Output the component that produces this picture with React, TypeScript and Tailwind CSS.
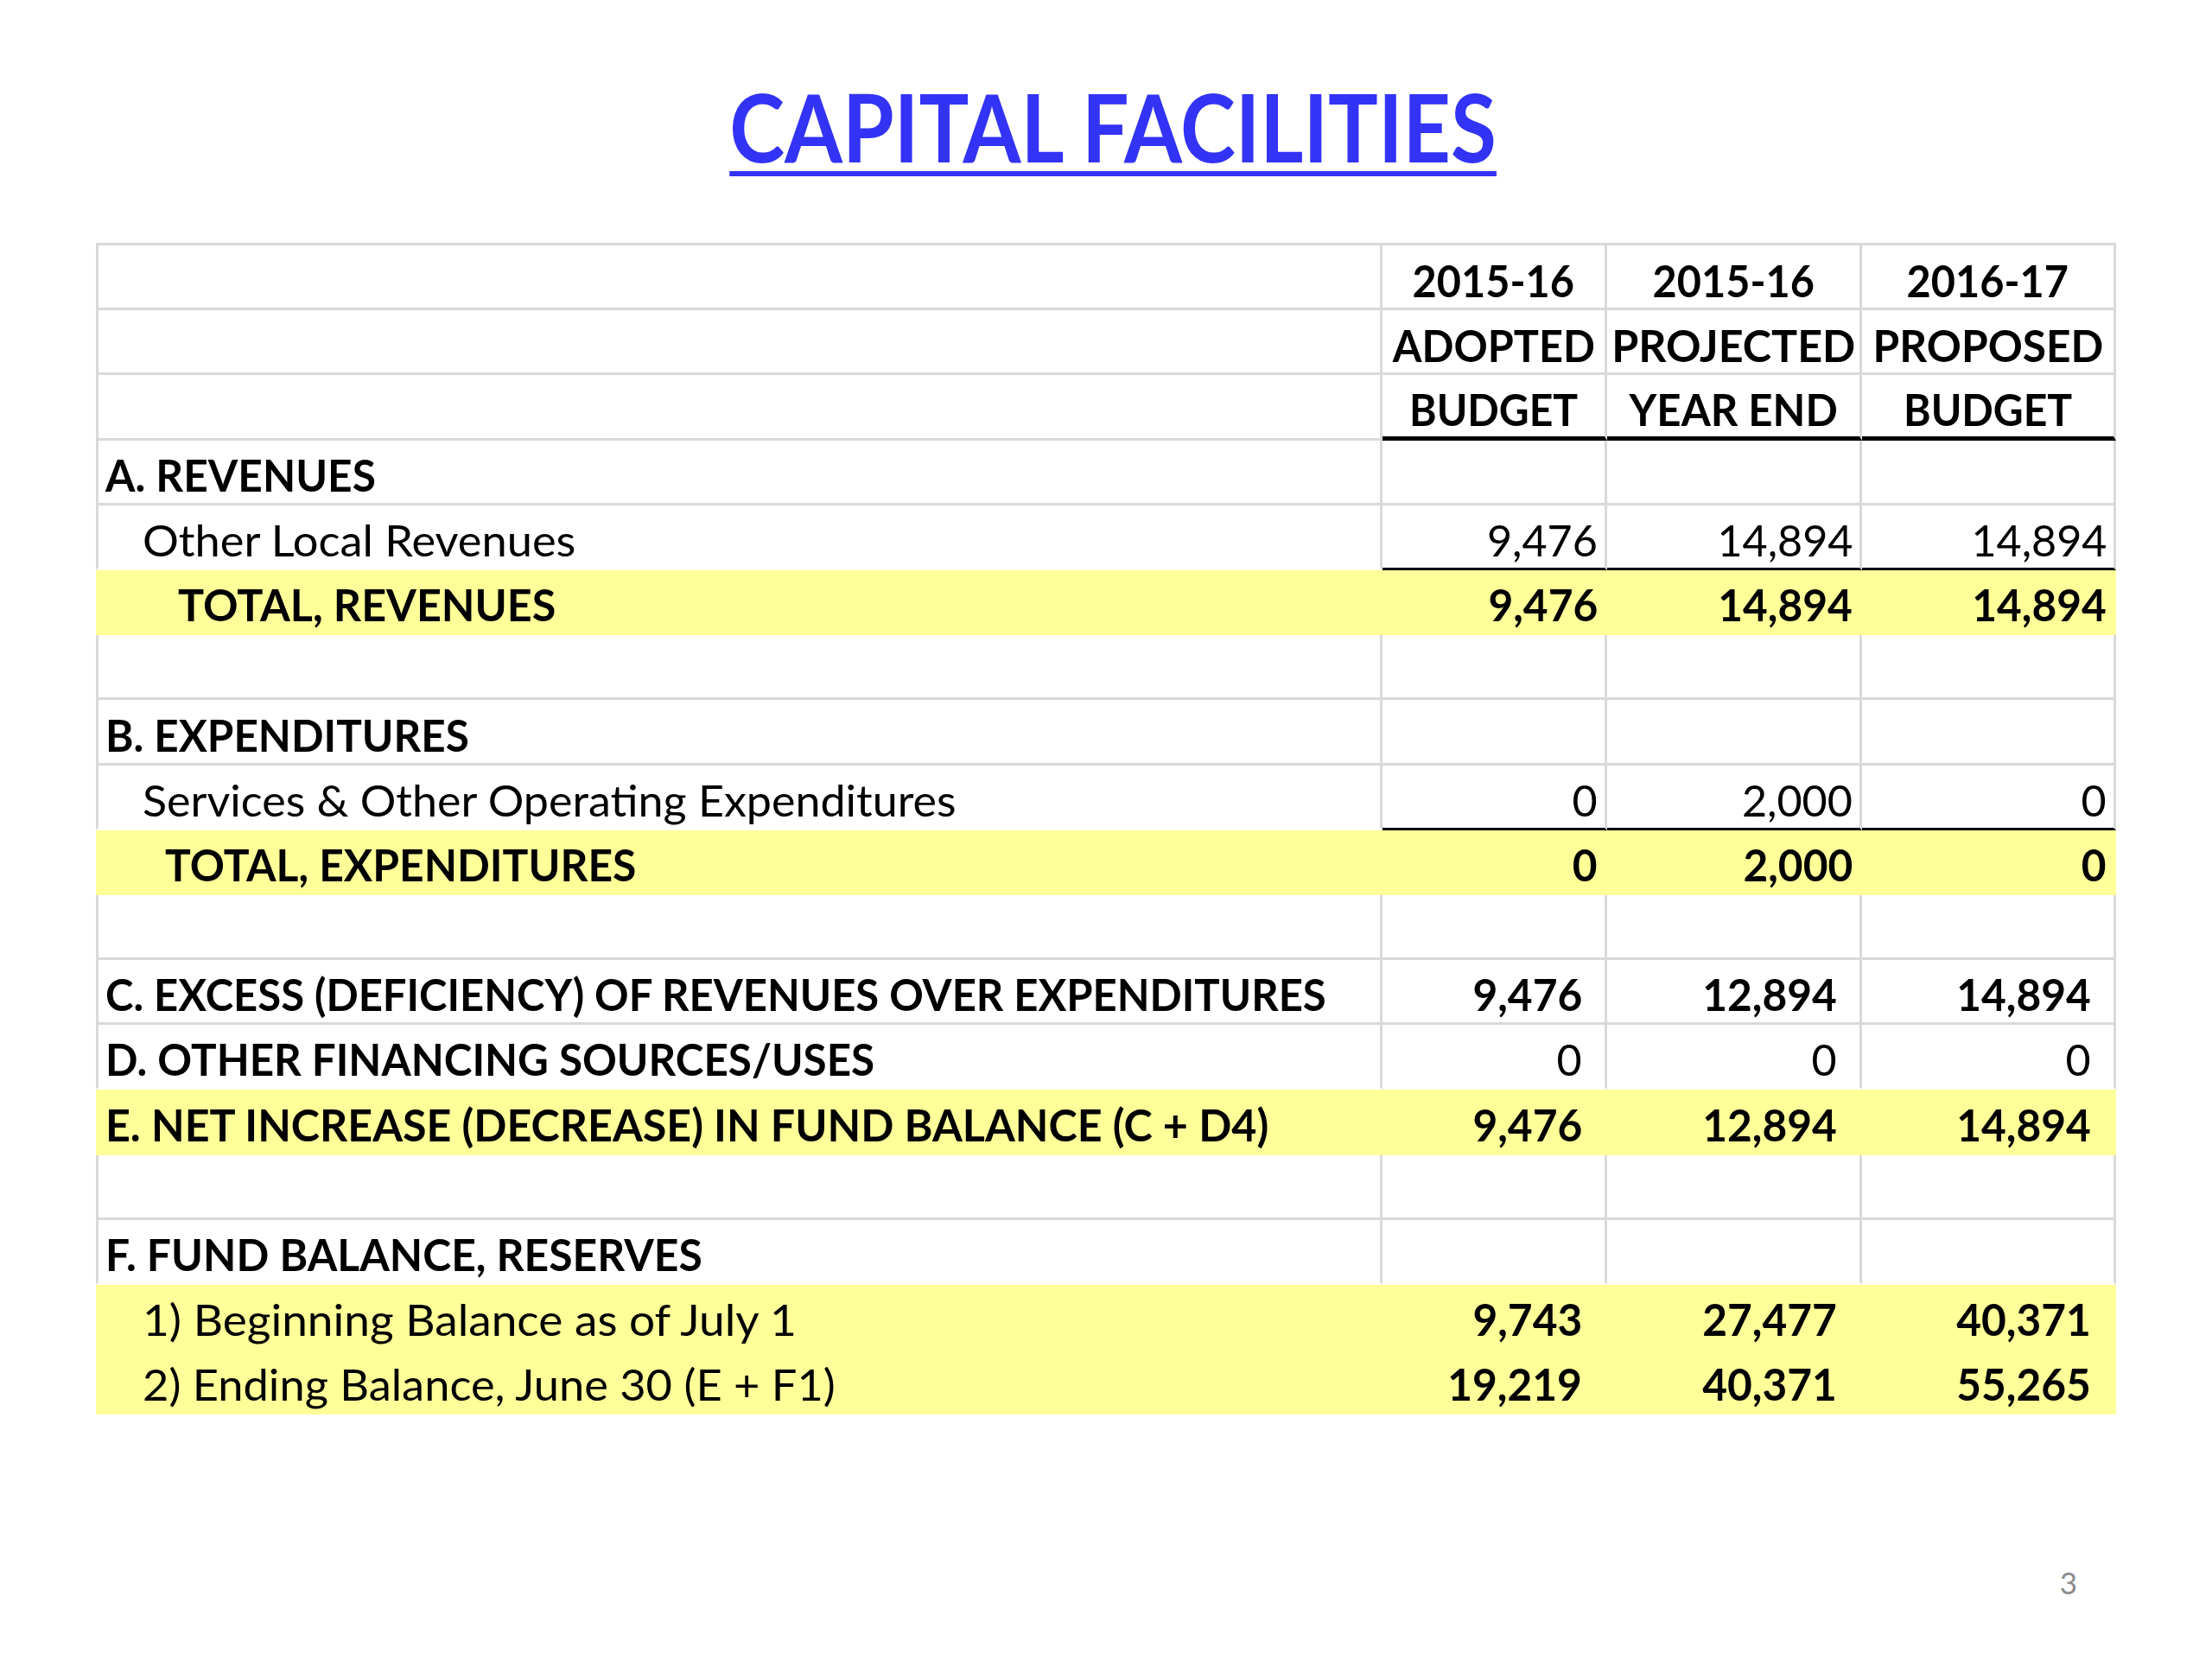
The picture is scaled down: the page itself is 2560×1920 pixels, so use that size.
import React from "react";

type Bottom = "gray" | "none" | "black";

type RowDef = {
  label: string;
  indent: string;
  sx: string;
  bold: boolean;
  vals: string[];
  valsBold: boolean;
  far: boolean;
  yellow: boolean;
  bottom: Bottom;
};

const rows: RowDef[] = [
  { label: "A. REVENUES", indent: "pl-[8px]", sx: "scale-x-[0.974]", bold: true, vals: ["", "", ""], valsBold: false, far: false, yellow: false, bottom: "gray" },
  { label: "Other Local Revenues", indent: "pl-[51px]", sx: "scale-x-[1.027]", bold: false, vals: ["9,476", "14,894", "14,894"], valsBold: false, far: false, yellow: false, bottom: "black" },
  { label: "TOTAL, REVENUES", indent: "pl-[92px]", sx: "scale-x-[0.985]", bold: true, vals: ["9,476", "14,894", "14,894"], valsBold: true, far: false, yellow: true, bottom: "none" },
  { label: "", indent: "pl-[8px]", sx: "scale-x-100", bold: false, vals: ["", "", ""], valsBold: false, far: false, yellow: false, bottom: "gray" },
  { label: "B. EXPENDITURES", indent: "pl-[8px]", sx: "scale-x-[0.969]", bold: true, vals: ["", "", ""], valsBold: false, far: false, yellow: false, bottom: "gray" },
  { label: "Services & Other Operating Expenditures", indent: "pl-[51px]", sx: "scale-x-[1.02]", bold: false, vals: ["0", "2,000", "0"], valsBold: false, far: false, yellow: false, bottom: "black" },
  { label: "TOTAL, EXPENDITURES", indent: "pl-[77px]", sx: "scale-x-[0.976]", bold: true, vals: ["0", "2,000", "0"], valsBold: true, far: false, yellow: true, bottom: "none" },
  { label: "", indent: "pl-[8px]", sx: "scale-x-100", bold: false, vals: ["", "", ""], valsBold: false, far: false, yellow: false, bottom: "gray" },
  { label: "C. EXCESS (DEFICIENCY) OF REVENUES OVER EXPENDITURES", indent: "pl-[8px]", sx: "scale-x-[0.961]", bold: true, vals: ["9,476", "12,894", "14,894"], valsBold: true, far: true, yellow: false, bottom: "gray" },
  { label: "D. OTHER FINANCING SOURCES/USES", indent: "pl-[8px]", sx: "scale-x-[0.968]", bold: true, vals: ["0", "0", "0"], valsBold: false, far: true, yellow: false, bottom: "none" },
  { label: "E. NET INCREASE (DECREASE) IN FUND BALANCE (C + D4)", indent: "pl-[8px]", sx: "scale-x-[0.984]", bold: true, vals: ["9,476", "12,894", "14,894"], valsBold: true, far: true, yellow: true, bottom: "none" },
  { label: "", indent: "pl-[8px]", sx: "scale-x-100", bold: false, vals: ["", "", ""], valsBold: false, far: false, yellow: false, bottom: "gray" },
  { label: "F. FUND BALANCE, RESERVES", indent: "pl-[8px]", sx: "scale-x-[0.977]", bold: true, vals: ["", "", ""], valsBold: false, far: false, yellow: false, bottom: "none" },
  { label: "1) Beginning Balance as of July 1", indent: "pl-[51px]", sx: "scale-x-[1.043]", bold: false, vals: ["9,743", "27,477", "40,371"], valsBold: true, far: true, yellow: true, bottom: "none" },
  { label: "2) Ending Balance, June 30 (E + F1)", indent: "pl-[51px]", sx: "scale-x-[1.027]", bold: false, vals: ["19,219", "40,371", "55,265"], valsBold: true, far: true, yellow: true, bottom: "none" },
];

function labelCellClass(r: RowDef) {
  if (r.yellow) return "border-l-[3px] border-r-[3px] border-b-[3px] border-transparent";
  if (r.bottom === "gray") return "border-l-[3px] border-r-[3px] border-b-[3px] border-[#d9d9d9]";
  return "border-l-[3px] border-r-[3px] border-b-[3px] border-[#d9d9d9] border-b-transparent";
}

function dataCellClass(r: RowDef) {
  if (r.yellow) return "border-r-[3px] border-b-[3px] border-transparent";
  if (r.bottom === "gray") return "border-r-[3px] border-b-[3px] border-[#d9d9d9]";
  if (r.bottom === "black") return "border-r-[3px] border-b-[3px] border-[#d9d9d9] border-b-black";
  return "border-r-[3px] border-b-[3px] border-[#d9d9d9] border-b-transparent";
}

type HeadCell = { text: string; sx: string };

function HeaderRow({ cells, last }: { cells: HeadCell[]; last: boolean }) {
  return (
    <div className="grid grid-cols-[1489px_260px_295px_294px] h-[75.2px]">
      <div className="border-l-[3px] border-r-[3px] border-b-[3px] border-[#d9d9d9]" />
      {cells.map((c, i) => (
        <div
          key={i}
          className={
            last
              ? "flex items-end justify-center pb-[6px] border-r-[3px] border-b-[5px] border-[#d9d9d9] border-b-black"
              : "flex items-end justify-center pb-[6px] border-r-[3px] border-b-[3px] border-[#d9d9d9]"
          }
        >
          <span className={`inline-block origin-center ${c.sx} text-[51px] leading-none font-bold whitespace-nowrap`}>{c.text}</span>
        </div>
      ))}
    </div>
  );
}

export default function App() {
  return (
    <div className="w-[2560px] h-[1920px] bg-white flex flex-col font-['Lato',sans-serif] text-black">
      <div className="mt-[90px] flex justify-center pl-[16px]">
        <h1 className="inline-block origin-center scale-x-[0.877] text-[110px] leading-none font-bold text-[#3333f5] underline decoration-[6px] underline-offset-[10px] whitespace-nowrap">
          CAPITAL FACILITIES
        </h1>
      </div>

      <div className="mt-[81px] mx-auto w-[2338px] flex flex-col border-t-[3px] border-[#d9d9d9]">
        <HeaderRow
          cells={[
            { text: "2015-16", sx: "scale-x-[0.953]" },
            { text: "2015-16", sx: "scale-x-[0.953]" },
            { text: "2016-17", sx: "scale-x-[0.953]" },
          ]}
          last={false}
        />
        <HeaderRow
          cells={[
            { text: "ADOPTED", sx: "scale-x-[0.953]" },
            { text: "PROJECTED", sx: "scale-x-[0.985]" },
            { text: "PROPOSED", sx: "scale-x-[0.974]" },
          ]}
          last={false}
        />
        <HeaderRow
          cells={[
            { text: "BUDGET", sx: "scale-x-[0.942]" },
            { text: "YEAR END", sx: "scale-x-[0.964]" },
            { text: "BUDGET", sx: "scale-x-[0.942]" },
          ]}
          last={true}
        />
        {rows.map((r, i) => (
          <div
            key={i}
            className={
              r.yellow
                ? "grid grid-cols-[1489px_260px_295px_294px] h-[75.2px] bg-[#ffff99]"
                : "grid grid-cols-[1489px_260px_295px_294px] h-[75.2px] bg-white"
            }
          >
            <div className={`flex items-end pb-[7px] ${r.indent} ${labelCellClass(r)}`}>
              <span
                className={
                  r.bold
                    ? `inline-block origin-left ${r.sx} text-[51px] leading-none font-bold whitespace-nowrap`
                    : `inline-block origin-left ${r.sx} text-[51px] leading-none whitespace-nowrap`
                }
              >
                {r.label}
              </span>
            </div>
            {r.vals.map((v, j) => (
              <div
                key={j}
                className={`flex items-end justify-end pb-[7px] ${r.far ? "pr-[26px]" : "pr-[8px]"} ${dataCellClass(r)}`}
              >
                <span
                  className={
                    r.valsBold
                      ? "inline-block origin-right scale-x-[0.974] text-[51px] leading-none font-bold"
                      : "inline-block origin-right scale-x-[0.985] text-[51px] leading-none"
                  }
                >
                  {v}
                </span>
              </div>
            ))}
          </div>
        ))}
      </div>

      <div className="mt-[177px] flex justify-end pr-[156px]">
        <span className="text-[35px] leading-none text-[#8c8c8c]">3</span>
      </div>
    </div>
  );
}
